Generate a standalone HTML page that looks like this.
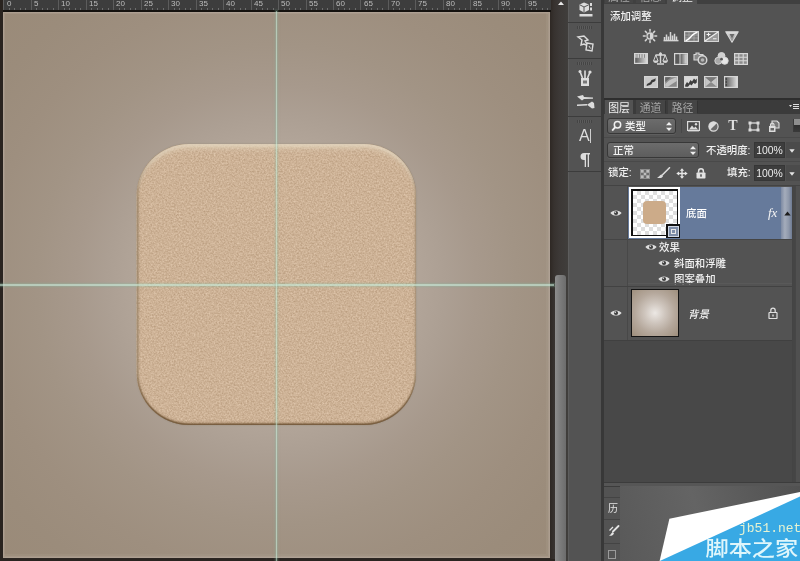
<!DOCTYPE html>
<html lang="zh-CN">
<head>
<meta charset="utf-8">
<title>Photoshop</title>
<style>
html,body{margin:0;padding:0;}
body{width:800px;height:561px;overflow:hidden;background:#2c2622;position:relative;
 font-family:"Liberation Sans","Noto Sans CJK SC",sans-serif;font-size:11px;color:#e0e0e0;}
.abs{position:absolute;}
.lbl,.tab,.fld,.gs{will-change:transform;}
/* ---------- document window ---------- */
#ruler{left:0;top:0;width:550.5px;height:10px;background:#3d3d3d;border-bottom:2.5px solid #15120f;overflow:hidden;}
#ruler span{will-change:transform;position:absolute;top:-1px;font-size:8px;line-height:10px;color:#bcbcbc;letter-spacing:0;}
#ruler i{position:absolute;top:0;width:1px;height:10px;background:#5c5c5c;}
#ruler b{position:absolute;top:8px;width:1px;height:2px;background:#6c6c6c;}
#leftedge{left:0;top:0;width:3px;height:561px;background:#29231f;}
#canvas{left:3px;top:12px;width:547px;height:546px;overflow:hidden;
 background:radial-gradient(circle 400px at 273.5px 272.5px,#e9e5e1 0,#c6bcb2 100px,#b2a599 140px,#ac9f93 170px,#a7998c 200px,#a29485 240px,#9e8f7f 290px,#9b8c7b 340px,#9a8a78 400px);}
#frame{left:0;top:0;width:547px;height:546px;box-sizing:border-box;border:1px solid rgba(205,195,185,.35);box-shadow:inset 0 0 0 1px rgba(190,178,168,.22),inset -3px -3px 0 0 rgba(190,178,168,.12);}
#sqsvg{left:133px;top:131.2px;}
#sq{left:133.5px;top:132.2px;width:279.5px;height:280.5px;border-radius:52px;
 box-shadow:inset 0 2.5px 2.5px rgba(232,219,198,.55),inset 0 8px 5px -3px rgba(226,211,188,.62),inset 0 -1.5px 1.5px rgba(105,78,45,.8),inset 0 -4px 3px -2px rgba(120,92,60,.35),inset 1.5px 0 1.5px rgba(115,90,60,.55),inset -1.2px 0 1.2px rgba(130,105,75,.5),0 0 1.5px rgba(110,90,65,.45);}
.guideh{left:0;top:284.3px;width:554px;height:1.5px;background:rgba(196,232,214,.66);box-shadow:0 0 0 1.1px rgba(140,192,165,.2),0 0 2px 1.5px rgba(140,192,165,.12);}
.guidev{left:275.6px;top:11px;width:1.7px;height:550px;background:rgba(196,232,214,.64);box-shadow:0 0 0 1.2px rgba(140,192,165,.2),0 0 2px 1.6px rgba(140,192,165,.12);}
#botedge{left:0;top:558.5px;width:555px;height:3px;background:#2a2420;}
#vtrack{left:550px;top:0;width:18px;height:561px;background:linear-gradient(90deg,#2e2824 0,#37322f 4px,#3c3836 9px,#403e3c 18px);}
#vthumb{left:555px;top:275px;width:11px;height:290px;border-radius:3px 3px 0 0;background:linear-gradient(90deg,#8d8d8d 0,#7c7c7c 45%,#6c6c6c 100%);}
/* ---------- tool strip ---------- */
#strip{left:568px;top:0;width:32.5px;height:561px;background:#535353;border-left:1px solid #5d5d5d;box-sizing:border-box;}
#gap{left:600.5px;top:0;width:3.5px;height:561px;background:#383838;}
.sep{left:568px;width:32.5px;height:1px;background:#3c3c3c;}
.grip{left:577px;width:15px;height:3px;background:repeating-linear-gradient(90deg,#444 0 1px,#5c5c5c 1px 2px);}
/* ---------- panels ---------- */
#adj{left:603.5px;top:4px;width:196.5px;height:94px;background:#535353;}
#adjtop{left:604px;top:0;width:196px;height:4px;background:#404040;}
#layers{left:603.5px;top:100px;width:196.5px;height:383px;background:#535353;}
#tabs{left:604px;top:100px;width:196px;height:14px;background:#3b3b3b;}
.tab{top:100px;height:14px;line-height:17px;font-size:10.8px;text-align:center;color:#a6a6a6;background:#454545;overflow:hidden;}
.tab.on{background:#535353;color:#eee;}
.dd{background:linear-gradient(#6c6c6c,#5d5d5d);border:1px solid #383838;border-radius:3px;box-sizing:border-box;color:#f0f0f0;box-shadow:0 1px 0 rgba(255,255,255,.07);}
.fld{background:#3d3d3d;border:1px solid #363636;box-sizing:border-box;color:#ececec;font-size:10.4px;line-height:15px;text-align:center;}
.lbl{font-size:10.4px;font-weight:500;line-height:14px;color:#f0f0f0;white-space:nowrap;}
</style>
</head>
<body>
<!-- document -->
<div id="canvas" class="abs">
  <div id="frame" class="abs"></div>
  <svg id="sqsvg" class="abs" width="281" height="283" viewBox="0 0 281 283">
   <filter id="nz" x="0" y="0" width="100%" height="100%" color-interpolation-filters="sRGB">
    <feTurbulence type="fractalNoise" baseFrequency="0.6" numOctaves="2" seed="7" result="n"/>
    <feColorMatrix in="n" type="matrix" values="0.20 0 0 0 0.704  0.22 0 0 0 0.588  0.24 0 0 0 0.468  0 0 0 0 1" result="c"/>
    <feComposite in="c" in2="SourceGraphic" operator="in"/>
   </filter>
   <rect x="0.5" y="1" width="279.5" height="280.5" rx="52" ry="52" fill="#ccb094" filter="url(#nz)"/>
  </svg>
  <div id="sq" class="abs"></div>
</div>
<div id="vtrack" class="abs"></div>
<div id="vthumb" class="abs"></div>
<div id="ruler" class="abs"><i style="left:3.4px"></i><span style="left:6.5px">0</span><i style="left:30.9px"></i><span style="left:34.0px">5</span><i style="left:58.3px"></i><span style="left:61.4px">10</span><i style="left:85.8px"></i><span style="left:88.9px">15</span><i style="left:113.2px"></i><span style="left:116.3px">20</span><i style="left:140.7px"></i><span style="left:143.8px">25</span><i style="left:168.2px"></i><span style="left:171.3px">30</span><i style="left:195.6px"></i><span style="left:198.7px">35</span><i style="left:223.1px"></i><span style="left:226.2px">40</span><i style="left:250.5px"></i><span style="left:253.6px">45</span><i style="left:278.0px"></i><span style="left:281.1px">50</span><i style="left:305.5px"></i><span style="left:308.6px">55</span><i style="left:332.9px"></i><span style="left:336.0px">60</span><i style="left:360.4px"></i><span style="left:363.5px">65</span><i style="left:387.8px"></i><span style="left:390.9px">70</span><i style="left:415.3px"></i><span style="left:418.4px">75</span><i style="left:442.8px"></i><span style="left:445.9px">80</span><i style="left:470.2px"></i><span style="left:473.3px">85</span><i style="left:497.7px"></i><span style="left:500.8px">90</span><i style="left:525.1px"></i><span style="left:528.2px">95</span><b style="left:8.9px"></b><b style="left:14.4px"></b><b style="left:19.9px"></b><b style="left:25.4px"></b><b style="left:36.4px"></b><b style="left:41.8px"></b><b style="left:47.3px"></b><b style="left:52.8px"></b><b style="left:63.8px"></b><b style="left:69.3px"></b><b style="left:74.8px"></b><b style="left:80.3px"></b><b style="left:91.3px"></b><b style="left:96.8px"></b><b style="left:102.3px"></b><b style="left:107.7px"></b><b style="left:118.7px"></b><b style="left:124.2px"></b><b style="left:129.7px"></b><b style="left:135.2px"></b><b style="left:146.2px"></b><b style="left:151.7px"></b><b style="left:157.2px"></b><b style="left:162.7px"></b><b style="left:173.7px"></b><b style="left:179.1px"></b><b style="left:184.6px"></b><b style="left:190.1px"></b><b style="left:201.1px"></b><b style="left:206.6px"></b><b style="left:212.1px"></b><b style="left:217.6px"></b><b style="left:228.6px"></b><b style="left:234.1px"></b><b style="left:239.6px"></b><b style="left:245.0px"></b><b style="left:256.0px"></b><b style="left:261.5px"></b><b style="left:267.0px"></b><b style="left:272.5px"></b><b style="left:283.5px"></b><b style="left:289.0px"></b><b style="left:294.5px"></b><b style="left:300.0px"></b><b style="left:311.0px"></b><b style="left:316.4px"></b><b style="left:321.9px"></b><b style="left:327.4px"></b><b style="left:338.4px"></b><b style="left:343.9px"></b><b style="left:349.4px"></b><b style="left:354.9px"></b><b style="left:365.9px"></b><b style="left:371.4px"></b><b style="left:376.9px"></b><b style="left:382.3px"></b><b style="left:393.3px"></b><b style="left:398.8px"></b><b style="left:404.3px"></b><b style="left:409.8px"></b><b style="left:420.8px"></b><b style="left:426.3px"></b><b style="left:431.8px"></b><b style="left:437.3px"></b><b style="left:448.3px"></b><b style="left:453.7px"></b><b style="left:459.2px"></b><b style="left:464.7px"></b><b style="left:475.7px"></b><b style="left:481.2px"></b><b style="left:486.7px"></b><b style="left:492.2px"></b><b style="left:503.2px"></b><b style="left:508.7px"></b><b style="left:514.2px"></b><b style="left:519.6px"></b><b style="left:530.6px"></b><b style="left:536.1px"></b><b style="left:541.6px"></b><b style="left:547.1px"></b></div>
<div id="leftedge" class="abs"></div>
<div id="botedge" class="abs"></div>
<div class="abs guideh"></div>
<div class="abs guidev"></div>

<!-- tool strip -->
<div id="strip" class="abs"></div>
<div id="gap" class="abs"></div>
<svg class="abs" style="left:556px;top:0" width="10" height="8" viewBox="0 0 10 8"><path d="M2 5 L5 1.5 L8 5 Z" fill="#e8e8e8"/></svg>
<div class="abs sep" style="top:22px"></div>
<div class="abs grip" style="top:26px"></div>
<div class="abs sep" style="top:58px"></div>
<div class="abs grip" style="top:62px"></div>
<div class="abs sep" style="top:116px"></div>
<div class="abs grip" style="top:120px"></div>
<div class="abs sep" style="top:171px"></div>
<!-- 3D icon -->
<svg class="abs" style="left:578px;top:2px" width="16" height="15" viewBox="0 0 16 15">
 <path d="M6 0.5 L11 2.5 L11 8 L6 10.5 L1.5 8 L1.5 2.5 Z" fill="#dcdcdc"/>
 <path d="M6 5 L6 10 M6 5 L1.8 2.8 M6 5 L10.8 2.8" stroke="#555" stroke-width="1" fill="none"/>
 <rect x="12" y="1" width="2" height="3" fill="#dcdcdc"/><rect x="12" y="5.5" width="2" height="3" fill="#dcdcdc"/>
 <rect x="1.5" y="12" width="13" height="2.5" fill="#dcdcdc"/>
</svg>
<!-- paths/notes icon -->
<svg class="abs" style="left:576px;top:34px" width="20" height="20" viewBox="0 0 20 20">
 <path d="M2 3 L8 2 L12 6 L9 7 L12 12 L8 10 L5 11 L6 6 Z" fill="none" stroke="#dcdcdc" stroke-width="1.4"/>
 <path d="M11 9 L17 10 L16 17 L10 16 Z" fill="#535353" stroke="#dcdcdc" stroke-width="1.4"/>
 <path d="M13 12 L14.5 14.5" stroke="#dcdcdc" stroke-width="1"/>
</svg>
<!-- brushes in cup -->
<svg class="abs" style="left:577px;top:69px" width="16" height="18" viewBox="0 0 16 18">
 <rect x="4" y="9" width="8" height="8" fill="#dcdcdc"/>
 <rect x="6" y="11.5" width="4" height="3" fill="#777"/>
 <path d="M5.5 9 L3 2.5 M8 9 L8 1.5 M10.5 9 L13 3" stroke="#dcdcdc" stroke-width="1.6"/>
 <circle cx="3" cy="2.5" r="1.5" fill="#dcdcdc"/><circle cx="13" cy="3" r="1.6" fill="#dcdcdc"/>
</svg>
<!-- brush presets -->
<svg class="abs" style="left:576px;top:94px" width="20" height="16" viewBox="0 0 20 16">
 <path d="M1 2.5 L7 1 L8 3 L17 3.5 L17 4.8 L8 5 L6 6.5 Z" fill="#dcdcdc"/>
 <path d="M1 10.5 L11 10 L11 11.5 L1 12 Z" fill="#dcdcdc"/>
 <path d="M11 10.8 L16 7.5 L18 9 L18.5 14 L16 14.5 Z" fill="#dcdcdc"/>
</svg>
<!-- A| -->
<div class="abs" style="left:579px;top:127px;width:14px;height:18px;font-size:16px;line-height:18px;color:#dedede;will-change:transform;">A</div>
<div class="abs" style="left:590px;top:129px;width:1px;height:14px;background:#cfcfcf;"></div>
<!-- pilcrow -->
<svg class="abs" style="left:579px;top:152px" width="12" height="16" viewBox="0 0 12 16">
 <path d="M5 1 H11 V2.5 H10 V15 H8.7 V2.5 H7 V15 H5.7 V8 H5 A3.5 3.5 0 0 1 5 1 Z" fill="#dcdcdc"/>
</svg>

<!-- panels -->
<div id="adjtop" class="abs"></div>
<div class="abs tab" style="left:605px;top:-11px;width:28px;">属性</div>
<div class="abs tab" style="left:636px;top:-11px;width:29px;">信息</div>
<div class="abs tab on" style="left:667px;top:-11px;width:30px;height:15px;">调整</div>
<div id="adj" class="abs"></div>
<div class="abs lbl" style="left:610px;top:9.5px;">添加调整</div>
<div id="adjicons">
<svg class="abs" width="0" height="0" style="left:0;top:0"><defs><linearGradient id="gh" x1="0" x2="1" y1="0" y2="0"><stop offset="0" stop-color="#555"/><stop offset="1" stop-color="#e0e0e0"/></linearGradient><linearGradient id="gv" x1="0" x2="0" y1="0" y2="1"><stop offset="0" stop-color="#e6e6e6"/><stop offset="1" stop-color="#777"/></linearGradient><linearGradient id="gd" x1="0" x2="1" y1="0" y2="1"><stop offset="0" stop-color="#6a6a6a"/><stop offset="1" stop-color="#d8d8d8"/></linearGradient></defs></svg>
<svg class="abs" style="left:642px;top:28px" width="16" height="16" viewBox="0 0 16 16"><path d="M12.80 8.00 L14.60 8.00" stroke="#d6d6d6" stroke-width="1.5" stroke-linecap="round"/><path d="M11.39 11.39 L12.67 12.67" stroke="#d6d6d6" stroke-width="1.5" stroke-linecap="round"/><path d="M8.00 12.80 L8.00 14.60" stroke="#d6d6d6" stroke-width="1.5" stroke-linecap="round"/><path d="M4.61 11.39 L3.33 12.67" stroke="#d6d6d6" stroke-width="1.5" stroke-linecap="round"/><path d="M3.20 8.00 L1.40 8.00" stroke="#d6d6d6" stroke-width="1.5" stroke-linecap="round"/><path d="M4.61 4.61 L3.33 3.33" stroke="#d6d6d6" stroke-width="1.5" stroke-linecap="round"/><path d="M8.00 3.20 L8.00 1.40" stroke="#d6d6d6" stroke-width="1.5" stroke-linecap="round"/><path d="M11.39 4.61 L12.67 3.33" stroke="#d6d6d6" stroke-width="1.5" stroke-linecap="round"/><circle cx="8" cy="8" r="3" fill="#6a6a6a" stroke="#d6d6d6" stroke-width="1.3"/><path d="M8 5 A3 3 0 0 1 8 11 Z" fill="#d6d6d6"/></svg>
<svg class="abs" style="left:663px;top:30px" width="16" height="12" viewBox="0 0 16 12"><path d="M0.5 10.6 H15.5" stroke="#d6d6d6" stroke-width="1.5"/><path d="M1.5 10 V7 M3.5 10 V4.5 M5.5 10 V6.5 M7.5 10 V2 M9.5 10 V5.5 M11.5 10 V3.8 M13.5 10 V6.5" stroke="#d6d6d6" stroke-width="1.5"/></svg>
<svg class="abs" style="left:684px;top:31px" width="15" height="11" viewBox="0 0 15 11"><rect x="0.6" y="0.6" width="13.8" height="9.8" fill="#7a7a7a" stroke="#d6d6d6" stroke-width="1.2"/><path d="M5 1 V10 M10 1 V10 M1 4 H14 M1 7 H14" stroke="#b0b0b0" stroke-width="0.7"/><path d="M1.5 9.5 C6 9.5 8 1.5 13.5 1.5" fill="none" stroke="#fff" stroke-width="1.4"/></svg>
<svg class="abs" style="left:704px;top:31px" width="15" height="11" viewBox="0 0 15 11"><rect x="0.6" y="0.6" width="13.8" height="9.8" fill="#6e6e6e" stroke="#d6d6d6" stroke-width="1.2"/><path d="M1 10 L14 1 L14 10 Z" fill="#9a9a9a"/><path d="M1 10 L14 1" stroke="#f0f0f0" stroke-width="1.2"/><path d="M2.5 3.5 H6.5 M4.5 1.8 V5.2 M9 7.8 H12.5" stroke="#f0f0f0" stroke-width="1.1"/></svg>
<svg class="abs" style="left:724.5px;top:31px" width="14" height="12" viewBox="0 0 14 12"><path d="M0.8 0.8 H13.2 L7 11.2 Z" fill="url(#gv)" stroke="#d6d6d6" stroke-width="1.2" stroke-linejoin="round"/><path d="M4.5 3 H9.5 L7 7.5 Z" fill="#6a6a6a"/></svg>
<svg class="abs" style="left:634px;top:53px" width="14" height="11" viewBox="0 0 14 11"><rect x="0.6" y="0.6" width="12.8" height="9.8" fill="url(#gh)" stroke="#d6d6d6" stroke-width="1.2"/><rect x="1.2" y="1.2" width="11.6" height="3.6" fill="#cfcfcf"/><path d="M3 1.2 V4.8 M5.5 1.2 V4.8 M8 1.2 V4.8 M10.5 1.2 V4.8" stroke="#777" stroke-width="0.8"/></svg>
<svg class="abs" style="left:653px;top:52px" width="15" height="13" viewBox="0 0 15 13"><path d="M7.5 0.5 V11 M2.5 3 H12.5 M4 12 H11" stroke="#d6d6d6" stroke-width="1.4"/><circle cx="7.5" cy="2" r="1.6" fill="#d6d6d6"/><path d="M2.8 3 L0.5 9 H5.1 Z M12.2 3 L9.9 9 H14.5 Z" fill="none" stroke="#d6d6d6" stroke-width="1"/><path d="M0.3 9 H5.3 A2.5 2 0 0 1 0.3 9 Z M9.7 9 H14.7 A2.5 2 0 0 1 9.7 9 Z" fill="#d6d6d6"/></svg>
<svg class="abs" style="left:674px;top:53px" width="14" height="12" viewBox="0 0 14 12"><rect x="0.6" y="0.6" width="12.8" height="10.8" fill="#5a5a5a" stroke="#d6d6d6" stroke-width="1.2"/><rect x="6" y="1.2" width="6.8" height="9.6" fill="url(#gh)"/><path d="M6 1 V11" stroke="#d6d6d6" stroke-width="1"/></svg>
<svg class="abs" style="left:693px;top:52px" width="16" height="14" viewBox="0 0 16 14"><path d="M1 2.5 H3 V1 H6 V2.5 H10 V8 H1 Z" fill="#8a8a8a" stroke="#d6d6d6" stroke-width="1.1"/><circle cx="9.5" cy="8" r="4.3" fill="#6a6a6a" stroke="#d6d6d6" stroke-width="1.4"/><circle cx="9.5" cy="8" r="1.8" fill="#b5b5b5"/></svg>
<svg class="abs" style="left:713.5px;top:52px" width="15" height="13" viewBox="0 0 15 13"><circle cx="7.5" cy="4" r="3.5" fill="#d0d0d0" stroke="#d6d6d6" stroke-width="1"/><circle cx="4.3" cy="8.8" r="3.5" fill="#a8a8a8" stroke="#d6d6d6" stroke-width="1"/><circle cx="10.7" cy="8.8" r="3.5" fill="#e6e6e6" stroke="#d6d6d6" stroke-width="1"/><circle cx="7.5" cy="7.2" r="1.4" fill="#555"/></svg>
<svg class="abs" style="left:734px;top:53px" width="14" height="12" viewBox="0 0 14 12"><rect x="0.6" y="0.6" width="12.8" height="10.8" fill="#8c8c8c" stroke="#d6d6d6" stroke-width="1.2"/><path d="M4.8 1 V11 M9.2 1 V11 M1 4.2 H13 M1 7.8 H13" stroke="#d6d6d6" stroke-width="1.1"/></svg>
<svg class="abs" style="left:644px;top:75.5px" width="14" height="12" viewBox="0 0 14 12"><rect x="0.6" y="0.6" width="12.8" height="10.8" fill="#c9c9c9" stroke="#d6d6d6" stroke-width="1.2"/><path d="M2.5 9.8 C3 6.5 6 7.5 6.8 5.2 C7.6 3 10.5 4 11.5 2 L11.5 4.6 C10.5 6.5 8.6 5.6 7.8 7.4 C7 9.4 4.5 8.6 4 9.8 Z" fill="#3a3a3a"/></svg>
<svg class="abs" style="left:664px;top:75.5px" width="14" height="12" viewBox="0 0 14 12"><rect x="0.6" y="0.6" width="12.8" height="10.8" fill="#8a8a8a" stroke="#d6d6d6" stroke-width="1.2"/><path d="M1.2 10.8 L1.2 8 L5 4.5 L9 2.5 L12.8 1.2 L12.8 5 L8 8 L4 10.8 Z" fill="#c4c4c4"/><path d="M1.2 6 L7 1.2 L1.2 1.2 Z" fill="#666"/></svg>
<svg class="abs" style="left:684px;top:75.5px" width="14" height="12" viewBox="0 0 14 12"><rect x="0.6" y="0.6" width="12.8" height="10.8" fill="#d8d8d8" stroke="#d6d6d6" stroke-width="1.2"/><path d="M1.2 9 L3 6 L4.5 7.5 L6.5 4 L8 5.5 L10 2.5 L11.5 4 L12.8 2.5 L12.8 6.5 L11 8 L9.5 6.8 L7.5 9.6 L6 8.3 L4 10.8 L1.2 10.8 Z" fill="#3e3e3e"/></svg>
<svg class="abs" style="left:704px;top:75.5px" width="14" height="12" viewBox="0 0 14 12"><rect x="0.6" y="0.6" width="12.8" height="10.8" fill="#8a8a8a" stroke="#d6d6d6" stroke-width="1.2"/><path d="M1.2 1.2 L7 6 L1.2 10.8 Z" fill="#c6c6c6"/><path d="M12.8 1.2 L7 6 L12.8 10.8 Z" fill="#c6c6c6"/><path d="M1.2 1.2 L7 6 L12.8 1.2" fill="#7a7a7a"/></svg>
<svg class="abs" style="left:724px;top:75.5px" width="14" height="12" viewBox="0 0 14 12"><rect x="0.6" y="0.6" width="12.8" height="10.8" fill="url(#gh)" stroke="#d6d6d6" stroke-width="1.2"/><path d="M2.2 2 V4 M2.2 5 V7 M2.2 8 V10" stroke="#3c3c3c" stroke-width="1"/></svg>
</div>
<div class="abs" style="left:604px;top:98px;width:196px;height:2px;background:#2e2e2e"></div>
<div id="layers" class="abs"></div>
<div id="tabs" class="abs"></div>
<div class="abs tab on" style="left:605px;width:28px;">图层</div>
<div class="abs tab" style="left:636px;width:29px;">通道</div>
<div class="abs tab" style="left:668px;width:29px;">路径</div>
<div class="abs" style="left:665px;top:101px;width:1px;height:12px;background:#333"></div>
<div class="abs" style="left:697px;top:101px;width:1px;height:12px;background:#333"></div>
<svg class="abs" style="left:788px;top:103px" width="12" height="8" viewBox="0 0 12 8"><path d="M1 2 L4 2 L2.5 4 Z" fill="#ddd"/><path d="M5 1.5 H11 M5 3.5 H11 M5 5.5 H11" stroke="#ddd" stroke-width="1"/></svg>

<!-- filter row -->
<div class="abs dd" style="left:607px;top:118px;width:69px;height:16px;"></div>
<svg class="abs" style="left:611px;top:120px" width="12" height="12" viewBox="0 0 12 12"><circle cx="6.5" cy="4.8" r="3.2" fill="none" stroke="#f0f0f0" stroke-width="1.5"/><path d="M4.2 7.2 L1.2 10.6" stroke="#f0f0f0" stroke-width="1.8"/></svg>
<div class="abs lbl" style="left:624.5px;top:120px;color:#f2f2f2;">类型</div>
<svg class="abs" style="left:665px;top:121px" width="8" height="11" viewBox="0 0 8 11"><path d="M4 1 L7 4.3 H1 Z M4 10 L7 6.7 H1 Z" fill="#efefef"/></svg>
<div class="abs" style="left:681px;top:119px;width:1px;height:14px;background:#474747"></div>
<div id="filtericons">
<svg class="abs" style="left:687px;top:121px" width="13" height="11" viewBox="0 0 13 11"><rect x="0.6" y="0.6" width="11.8" height="8.8" fill="#4a4a4a" stroke="#dcdcdc" stroke-width="1.2"/><path d="M2 8.5 L5 4.5 L7 7 L8.5 5.5 L11 8.5 Z" fill="#dcdcdc"/><circle cx="9" cy="3.2" r="1.2" fill="#dcdcdc"/><path d="M1 10.5 H12" stroke="#8a8a8a" stroke-width="1"/></svg>
<svg class="abs" style="left:708px;top:121px" width="11" height="11" viewBox="0 0 11 11"><circle cx="5.5" cy="5.5" r="4.6" fill="#6a6a6a" stroke="#dcdcdc" stroke-width="1.2"/><path d="M2.2 8.8 A4.6 4.6 0 0 1 8.8 2.2 Z" fill="#dcdcdc"/></svg>
<div class="abs" style="left:727px;top:118px;width:12px;height:16px;font-family:'Liberation Serif',serif;font-weight:bold;font-size:14px;line-height:16px;text-align:center;color:#dedede;will-change:transform;">T</div>
<svg class="abs" style="left:748px;top:121px" width="12" height="11" viewBox="0 0 12 11"><rect x="2" y="2" width="8" height="7" fill="none" stroke="#dcdcdc" stroke-width="1.3"/><rect x="0.5" y="0.5" width="3" height="3" fill="#dcdcdc"/><rect x="8.5" y="0.5" width="3" height="3" fill="#dcdcdc"/><rect x="0.5" y="7.5" width="3" height="3" fill="#dcdcdc"/><rect x="8.5" y="7.5" width="3" height="3" fill="#dcdcdc"/></svg>
<svg class="abs" style="left:768px;top:120px" width="12" height="13" viewBox="0 0 12 13"><path d="M4 1 H9 L11 3 V8 H4 Z" fill="#777" stroke="#dcdcdc" stroke-width="1.1"/><rect x="1" y="6" width="6.5" height="6" fill="#dcdcdc"/><rect x="2.5" y="8" width="3.5" height="2.5" fill="#666"/><path d="M2.5 6 V4.5 A1.8 1.8 0 0 1 6 4.5 V6" fill="none" stroke="#dcdcdc" stroke-width="1.1"/></svg>
<div class="abs" style="left:793px;top:119px;width:7px;height:13px;background:linear-gradient(#8e8e8e 0,#8e8e8e 45%,#2f2f2f 45%,#3a3a3a 100%);border-left:1px solid #3a3a3a;"></div>
</div>

<!-- blend row -->
<div class="abs" style="left:604px;top:137px;width:196px;height:1px;background:#494949"></div>
<div class="abs" style="left:604px;top:161px;width:196px;height:1px;background:#494949"></div>
<div class="abs dd" style="left:607px;top:142px;width:92px;height:16px;"></div>
<div class="abs lbl" style="left:612.5px;top:144px;color:#f2f2f2;">正常</div>
<svg class="abs" style="left:689px;top:145px" width="8" height="11" viewBox="0 0 8 11"><path d="M4 1 L7 4.3 H1 Z M4 10 L7 6.7 H1 Z" fill="#efefef"/></svg>
<div class="abs lbl" style="left:706px;top:144px;">不透明度:</div>
<div class="abs fld" style="left:754px;top:142px;width:31px;height:16px;">100%</div>
<div class="abs" style="left:786px;top:142px;width:14px;height:16px;background:#4b4b4b;"></div>
<svg class="abs" style="left:789px;top:148.5px" width="6" height="4" viewBox="0 0 6 4"><path d="M0.3 0.3 H5.7 L3 3.7 Z" fill="#e4e4e4"/></svg>

<!-- lock row -->
<div class="abs lbl" style="left:607.5px;top:166px;">锁定:</div>
<div id="lockicons">
<svg class="abs" style="left:639.5px;top:169px" width="10" height="10" viewBox="0 0 10 10"><rect x="0.5" y="0.5" width="9" height="9" fill="#6c6c6c" stroke="#8c8c8c" stroke-width="1"/><rect x="1" y="1" width="2.7" height="2.7" fill="#bdbdbd"/><rect x="6.3" y="1" width="2.7" height="2.7" fill="#bdbdbd"/><rect x="3.7" y="3.7" width="2.6" height="2.6" fill="#bdbdbd"/><rect x="1" y="6.3" width="2.7" height="2.7" fill="#bdbdbd"/><rect x="6.3" y="6.3" width="2.7" height="2.7" fill="#bdbdbd"/></svg>
<svg class="abs" style="left:656px;top:167px" width="15" height="12" viewBox="0 0 15 12"><path d="M13.5 0.8 L6 8.2" stroke="#dcdcdc" stroke-width="1.6" stroke-linecap="round"/><path d="M1 10.5 C3 10.5 3.5 8.5 5.2 7.6 L7 9.2 C6 11.3 3 11.5 1 10.5 Z" fill="#dcdcdc"/></svg>
<svg class="abs" style="left:675.5px;top:167.5px" width="12" height="11" viewBox="0 0 12 11"><path d="M6 0.3 L8.2 2.8 H6.7 V4.8 H8.9 V3.4 L11.7 5.5 L8.9 7.6 V6.2 H6.7 V8.2 H8.2 L6 10.7 L3.8 8.2 H5.3 V6.2 H3.1 V7.6 L0.3 5.5 L3.1 3.4 V4.8 H5.3 V2.8 H3.8 Z" fill="#e6e6e6"/></svg>
<svg class="abs" style="left:696px;top:168px" width="10" height="11" viewBox="0 0 10 11"><rect x="0.5" y="4.5" width="9" height="6" rx="0.8" fill="#e2e2e2"/><path d="M2.6 4.8 V3.2 A2.4 2.4 0 0 1 7.4 3.2 V4.8" fill="none" stroke="#e2e2e2" stroke-width="1.5"/><rect x="4.2" y="6.3" width="1.6" height="2.4" fill="#555"/></svg>
</div>
<div class="abs lbl" style="left:727px;top:166px;">填充:</div>
<div class="abs fld" style="left:754px;top:165px;width:31px;height:16px;">100%</div>
<div class="abs" style="left:786px;top:165px;width:14px;height:16px;background:#4b4b4b;"></div>
<svg class="abs" style="left:789px;top:171.5px" width="6" height="4" viewBox="0 0 6 4"><path d="M0.3 0.3 H5.7 L3 3.7 Z" fill="#e4e4e4"/></svg>

<!-- layer list -->
<div id="list">
<div class="abs" style="left:604px;top:185px;width:196px;height:1px;background:#434343"></div>
<div class="abs" style="left:604px;top:341px;width:188px;height:141px;background:#484848"></div>
<div class="abs" style="left:792px;top:186px;width:8px;height:296px;background:linear-gradient(90deg,#444 0,#464646 4px,#505050 4px,#505050 8px)"></div>
<div class="abs" style="left:628px;top:187px;width:164px;height:52px;background:#667a9b"></div>
<div class="abs" style="left:781px;top:187px;width:11px;height:52px;background:linear-gradient(90deg,#7d8aa3 0,#a4acbb 35%,#8e98ab 70%,#6e7b93 100%)"></div>
<div class="abs" style="left:604px;top:239px;width:188px;height:1px;background:#454545"></div>
<div class="abs" style="left:627px;top:186px;width:1px;height:155px;background:#484848"></div>
<div class="abs" style="left:629px;top:187px;width:51px;height:51px;background:#fff;"></div>
<div class="abs" style="left:631px;top:189px;width:47px;height:47px;background:#111;"></div>
<div class="abs" style="left:633px;top:191px;width:44px;height:44px;background-color:#fff;background-image:linear-gradient(45deg,#dedede 25%,transparent 25%,transparent 75%,#dedede 75%),linear-gradient(45deg,#dedede 25%,transparent 25%,transparent 75%,#dedede 75%);background-size:8px 8px;background-position:0 0,4px 4px;"></div>
<div class="abs" style="left:643px;top:201px;width:23px;height:23px;border-radius:4px;background:#ccab89;"></div>
<div class="abs" style="left:666px;top:224px;width:14px;height:14px;background:#111;"></div>
<div class="abs" style="left:668px;top:226px;width:11px;height:11px;background:#7f8ea8;border:1px solid #cfd6e2;box-sizing:border-box;"></div>
<div class="abs" style="left:671px;top:229px;width:5px;height:5px;border:1px solid #e8e8e8;box-sizing:border-box;"></div>
<svg class="abs" style="left:609.5px;top:209px" width="12" height="8" viewBox="0 0 12 8"><path d="M0.4 4 C2.5 0.6 9.5 0.6 11.6 4 C9.5 7.4 2.5 7.4 0.4 4 Z" fill="#dedede"/><circle cx="6" cy="4" r="2.1" fill="#3f3f3f"/><circle cx="5.3" cy="3.2" r="0.8" fill="#dedede"/></svg>
<div class="abs lbl" style="left:686px;top:206.6px;color:#fff;">底面</div>
<div class="abs" style="left:768px;top:205px;width:14px;height:16px;font-family:'Liberation Serif',serif;font-style:italic;font-size:13px;line-height:16px;color:#f4f4f4;will-change:transform;">fx</div>
<svg class="abs" style="left:784px;top:211px" width="7" height="5" viewBox="0 0 7 5"><path d="M0.3 4.5 L3.5 0.5 L6.7 4.5 Z" fill="#1c1c1c"/></svg>
<svg class="abs" style="left:644.5px;top:243px" width="12" height="8" viewBox="0 0 12 8"><path d="M0.4 4 C2.5 0.6 9.5 0.6 11.6 4 C9.5 7.4 2.5 7.4 0.4 4 Z" fill="#dedede"/><circle cx="6" cy="4" r="2.1" fill="#3f3f3f"/><circle cx="5.3" cy="3.2" r="0.8" fill="#dedede"/></svg>
<div class="abs lbl" style="left:659px;top:241px;">效果</div>
<svg class="abs" style="left:658px;top:258.5px" width="12" height="8" viewBox="0 0 12 8"><path d="M0.4 4 C2.5 0.6 9.5 0.6 11.6 4 C9.5 7.4 2.5 7.4 0.4 4 Z" fill="#dedede"/><circle cx="6" cy="4" r="2.1" fill="#3f3f3f"/><circle cx="5.3" cy="3.2" r="0.8" fill="#dedede"/></svg>
<div class="abs lbl" style="left:673.5px;top:257px;">斜面和浮雕</div>
<svg class="abs" style="left:658px;top:274.5px" width="12" height="8" viewBox="0 0 12 8"><path d="M0.4 4 C2.5 0.6 9.5 0.6 11.6 4 C9.5 7.4 2.5 7.4 0.4 4 Z" fill="#dedede"/><circle cx="6" cy="4" r="2.1" fill="#3f3f3f"/><circle cx="5.3" cy="3.2" r="0.8" fill="#dedede"/></svg>
<div class="abs lbl" style="left:673.5px;top:273px;">图案叠加</div>
<div class="abs" style="left:604px;top:286px;width:188px;height:1px;background:#424242"></div>
<div class="abs" style="left:628px;top:282.5px;width:164px;height:1px;background:#595959"></div>
<div class="abs" style="left:631px;top:289px;width:48px;height:48px;background:#151515;"></div>
<div class="abs" style="left:632px;top:290px;width:46px;height:46px;background:radial-gradient(circle 34px at 23px 23px,#ece8e4 0,#cfc6be 10px,#b5a89c 20px,#a39483 30px,#9a8a78 34px);"></div>
<svg class="abs" style="left:609.5px;top:309px" width="12" height="8" viewBox="0 0 12 8"><path d="M0.4 4 C2.5 0.6 9.5 0.6 11.6 4 C9.5 7.4 2.5 7.4 0.4 4 Z" fill="#dedede"/><circle cx="6" cy="4" r="2.1" fill="#3f3f3f"/><circle cx="5.3" cy="3.2" r="0.8" fill="#dedede"/></svg>
<div class="abs lbl" style="left:687.5px;top:307.5px;font-style:italic;color:#f2f2f2;">背景</div>
<svg class="abs" style="left:768px;top:307px" width="10" height="12" viewBox="0 0 10 12"><rect x="1" y="5.5" width="8" height="6" rx="0.6" fill="none" stroke="#e0e0e0" stroke-width="1.2"/><path d="M2.8 5.5 V3.4 A2.2 2.2 0 0 1 7.2 3.4 V5.5" fill="none" stroke="#e0e0e0" stroke-width="1.2"/><rect x="4.3" y="7.5" width="1.4" height="2" fill="#e0e0e0"/></svg>
<div class="abs" style="left:604px;top:340px;width:188px;height:1px;background:#404040"></div>
</div>

<!-- bottom / watermark -->
<div id="wm">
<div class="abs" style="left:604px;top:482px;width:196px;height:4px;background:#565656;border-top:1px solid #3c3c3c;box-sizing:border-box;"></div>
<div class="abs" style="left:604px;top:486px;width:196px;height:75px;background:#535353"></div>
<div class="abs" style="left:604px;top:486px;width:16px;height:1px;background:#3c3c3c"></div>
<div class="abs" style="left:604px;top:497px;width:16px;height:1px;background:#444"></div>
<div class="abs" style="left:604px;top:519px;width:16px;height:1px;background:#444"></div>
<div class="abs" style="left:604px;top:543px;width:16px;height:1px;background:#444"></div>
<div class="abs" style="left:608px;top:502px;width:12px;height:14px;font-size:10px;line-height:14px;color:#e4e4e4;will-change:transform;">历</div>
<svg class="abs" style="left:607.5px;top:525px" width="12" height="12" viewBox="0 0 12 12"><path d="M10.5 1 L5 6.5" stroke="#e4e4e4" stroke-width="1.8" stroke-linecap="round"/><path d="M1 10.5 C2.5 10.5 3 8 4.6 7 L6 8.5 C5 10.8 2.5 11.3 1 10.5 Z" fill="#e4e4e4"/><path d="M1.5 5.5 L5 2" stroke="#e4e4e4" stroke-width="1.2"/></svg>
<div class="abs" style="left:608px;top:550px;width:8px;height:9px;border:1px solid #9a9a9a;box-sizing:border-box;"></div>
<div class="abs" style="left:620px;top:486px;width:180px;height:75px;background:linear-gradient(75deg,#595959 0,#646464 45%,#515151 100%);"></div>
<svg class="abs" style="left:620px;top:486px" width="180" height="75" viewBox="620 486 180 75"><polygon points="669.4,518.7 800,492 800,498 662,561 659.6,561" fill="#ffffff"/><polygon points="659.8,561 800,496.6 800,561" fill="#38a9e4"/></svg>
<div class="abs" style="left:739px;top:521px;width:70px;height:16px;font-family:'Liberation Mono',monospace;font-size:13px;line-height:16px;color:#e6f3d2;white-space:nowrap;letter-spacing:0;will-change:transform;">jb51.net</div>
<div class="abs" style="left:705.5px;top:534px;width:96px;height:28px;font-size:23.2px;font-weight:500;line-height:28px;color:#dff6fb;white-space:nowrap;transform:scaleY(.88);transform-origin:0 23.5px;">脚本之家</div>
</div>

</body>
</html>
